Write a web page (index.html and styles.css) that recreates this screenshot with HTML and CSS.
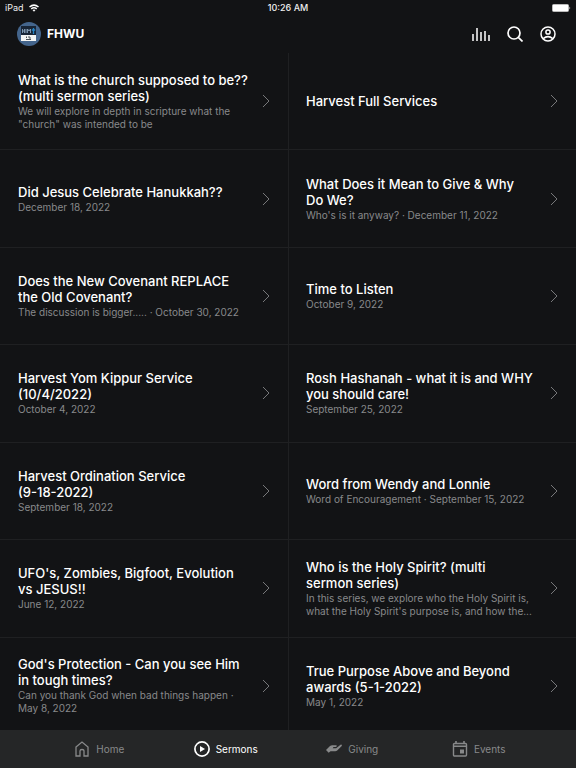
FILE: index.html
```html
<!DOCTYPE html>
<html lang="en">
<head>
  <meta charset="UTF-8">
  <meta name="viewport" content="width=device-width, initial-scale=1.0">
  <title>FHWU</title>
  <link rel="stylesheet" href="styles.css">
</head>
<body>
  <div class="status">
    <div class="device">
      <span>iPad</span>
      <svg width="10" height="8" viewBox="0 0 20 15" fill="none" stroke="#fff" stroke-width="3"><path d="M1 5.5Q10-2 19 5.5M4.500 9.300Q10 5 15.500 9.300"/><path d="M7 11.500Q10 9.500 13 11.500L10 15z" fill="#fff" stroke="none"/></svg>
    </div>
    <span class="clock">10:26 AM</span>
    <div class="battery">
      <svg width="19" height="8" viewBox="0 0 19 8"><rect x=".5" y=".5" width="16" height="7" rx="1" fill="#fff" stroke="#bbb"/><path d="M17.500 2.500q1.500 1.500 0 3z" fill="#fff"/></svg>
    </div>
  </div>
  <header class="header">
    <div class="brand">
      <svg width="24" height="24" viewBox="0 0 24 24">
        <circle cx="12" cy="12" r="12" fill="#44658c"/>
        <rect x="4" y="4" width="15" height="9" fill="#182536"/>
        <rect x="4" y="13" width="15" height="6" fill="#f4f5f4"/>
        <path d="M5.500 7v4M7.500 7v4M5.500 9h2M9 7v4M10.500 11V7l1.500 2 1.500-2v4" fill="none" stroke="#88a2ba" stroke-width=".9"/>
        <path d="M16.500 6v6M14.800 8h3.400" stroke="#2483c5" stroke-width="1.300"/>
        <path d="M9.500 14.500v1.500M12 14v2h2M9 17.500h5" fill="none" stroke="#4b5257"/>
      </svg>
      <h1>FHWU</h1>
    </div>
    <div class="actions">
      <button type="button" aria-label="Now playing">
        <svg width="18" height="14" viewBox="0 0 18 14" stroke="#fff" stroke-width="1.500"><path d="M1 7v7M5 1v13M9 5v9M13 4v10M17 8v6"/></svg>
      </button>
      <button type="button" aria-label="Search">
        <svg width="16" height="16" viewBox="0 0 16 16" fill="none" stroke="#fff" stroke-width="1.700"><circle cx="7" cy="7" r="6"/><path d="M11.300 11.300l4.200 4.200"/></svg>
      </button>
      <button type="button" aria-label="Account">
        <svg width="16" height="16" viewBox="0 0 16 16" fill="none" stroke="#fff" stroke-width="1.500"><circle cx="8" cy="8" r="7"/><circle cx="8" cy="6" r="2.100"/><path d="M3.200 12.600Q8 8.600 12.800 12.600"/></svg>
      </button>
    </div>
  </header>

  <main class="sermons">
    <a class="item" href="#"><div class="text"><h2>What is the church supposed to be?? (multi sermon series)</h2><p>We will explore in depth in scripture what the "church" was intended to be</p></div><svg class="chevron" viewBox="0 0 8 14"><path d="M1 1l6 6-6 6"/></svg></a>
    <a class="item" href="#"><div class="text"><h2>Harvest Full Services</h2></div><svg class="chevron" viewBox="0 0 8 14"><path d="M1 1l6 6-6 6"/></svg></a>
    <a class="item" href="#"><div class="text"><h2>Did Jesus Celebrate Hanukkah??</h2><p>December 18, 2022</p></div><svg class="chevron" viewBox="0 0 8 14"><path d="M1 1l6 6-6 6"/></svg></a>
    <a class="item" href="#"><div class="text"><h2>What Does it Mean to Give &amp; Why Do We?</h2><p>Who's is it anyway? · December 11, 2022</p></div><svg class="chevron" viewBox="0 0 8 14"><path d="M1 1l6 6-6 6"/></svg></a>
    <a class="item" href="#"><div class="text"><h2>Does the New Covenant REPLACE the Old Covenant?</h2><p>The discussion is bigger..... · October 30, 2022</p></div><svg class="chevron" viewBox="0 0 8 14"><path d="M1 1l6 6-6 6"/></svg></a>
    <a class="item" href="#"><div class="text"><h2>Time to Listen</h2><p>October 9, 2022</p></div><svg class="chevron" viewBox="0 0 8 14"><path d="M1 1l6 6-6 6"/></svg></a>
    <a class="item" href="#"><div class="text"><h2>Harvest Yom Kippur Service (10/4/2022)</h2><p>October 4, 2022</p></div><svg class="chevron" viewBox="0 0 8 14"><path d="M1 1l6 6-6 6"/></svg></a>
    <a class="item" href="#"><div class="text"><h2>Rosh Hashanah - what it is and WHY you should care!</h2><p>September 25, 2022</p></div><svg class="chevron" viewBox="0 0 8 14"><path d="M1 1l6 6-6 6"/></svg></a>
    <a class="item" href="#"><div class="text"><h2>Harvest Ordination Service<br>(9-18-2022)</h2><p>September 18, 2022</p></div><svg class="chevron" viewBox="0 0 8 14"><path d="M1 1l6 6-6 6"/></svg></a>
    <a class="item" href="#"><div class="text"><h2>Word from Wendy and Lonnie</h2><p>Word of Encouragement · September 15, 2022</p></div><svg class="chevron" viewBox="0 0 8 14"><path d="M1 1l6 6-6 6"/></svg></a>
    <a class="item" href="#"><div class="text"><h2>UFO's, Zombies, Bigfoot, Evolution vs JESUS!!</h2><p>June 12, 2022</p></div><svg class="chevron" viewBox="0 0 8 14"><path d="M1 1l6 6-6 6"/></svg></a>
    <a class="item" href="#"><div class="text"><h2>Who is the Holy Spirit? (multi sermon series)</h2><p>In this series, we explore who the Holy Spirit is, what the Holy Spirit's purpose is, and how the...</p></div><svg class="chevron" viewBox="0 0 8 14"><path d="M1 1l6 6-6 6"/></svg></a>
    <a class="item" href="#"><div class="text"><h2>God's Protection - Can you see Him in tough times?</h2><p>Can you thank God when bad things happen · May 8, 2022</p></div><svg class="chevron" viewBox="0 0 8 14"><path d="M1 1l6 6-6 6"/></svg></a>
    <a class="item" href="#"><div class="text"><h2>True Purpose Above and Beyond awards (5-1-2022)</h2><p>May 1, 2022</p></div><svg class="chevron" viewBox="0 0 8 14"><path d="M1 1l6 6-6 6"/></svg></a>
  </main>

  <nav class="tabs">
    <a href="#">
      <svg width="16" height="16" viewBox="0 0 16 16" fill="none" stroke="currentColor" stroke-width="1.300"><path d="M2 6l6-5 6 5v9h-4v-5q0-1.500-2-1.500T6 10v5H2z"/></svg>
      Home
    </a>
    <a class="active" href="#">
      <svg width="16" height="16" viewBox="0 0 16 16"><circle cx="8" cy="8" r="7.100" fill="none" stroke="currentColor" stroke-width="1.700"/><path d="M6 5l5 3-5 3z" fill="currentColor"/></svg>
      Sermons
    </a>
    <a href="#">
      <svg width="16" height="16" viewBox="0 0 16 16" fill="currentColor"><path d="M0 9l4-4q1-.8 2.200-.8H10q1 0 .8.900t-1.300.9H7.500l-.8 1.200h3.500l4.300-3.400q1.100-.5 1.400.4.100.5-.4 1l-4.300 4.300q-.8.700-2 .7H4.500l-1.800 1.500z"/></svg>
      Giving
    </a>
    <a href="#">
      <svg width="16" height="16" viewBox="0 0 16 16" fill="none" stroke="currentColor" stroke-width="1.400"><rect x="1.500" y="2.500" width="13" height="12.500" rx="1"/><path d="M1.500 5.200h13M4 0v3M12 0v3" stroke-width="1.600"/><rect x="8" y="8.500" width="4" height="4" fill="currentColor" stroke="none"/></svg>
      Events
    </a>
  </nav>
</body>
</html>
```
FILE: styles.css
```css
* { box-sizing: border-box; }
body { font-family: Inter, "Liberation Sans", sans-serif; margin: 0; min-height: 100vh; display: flex; flex-direction: column; background: #121315; color: #fff; }
svg { display: block; flex: none; }
h1, h2, p { margin: 0; }
a { color: inherit; text-decoration: none; }

.status { display: grid; grid-template-columns: 1fr auto 1fr; align-items: center; height: 16px; padding: 0 5px; font-size: 9px; line-height: 16px; color: #eee; }
.device { display: flex; align-items: center; gap: 5px; }
.clock { font-weight: 500; }
.battery { justify-self: end; }

.header { display: flex; justify-content: space-between; align-items: center; height: 37px; padding: 0 20px 1px 17px; }
.brand { display: flex; align-items: center; gap: 6px; }
.brand h1 { font-size: 12px; line-height: 16px; font-weight: 700; }
.actions { display: flex; align-items: center; gap: 17px; }
.actions button { display: block; padding: 0; border: 0; background: none; }

.sermons { flex: 1; display: grid; grid-template-columns: 1fr 1fr; grid-auto-rows: 1fr; }
.item { display: flex; align-items: center; gap: 12px; min-height: 88px; padding: 8px 18px; border-bottom: 1px solid #1f2022; }
.item:nth-child(even) { gap: 16px; padding-left: 17px; border-left: 1px solid #1f2022; }
.text { flex: 1; min-width: 0; }
.text h2 { font-size: 13px; line-height: 16px; font-weight: 500; }
.text p { margin-top: 1px; font-size: 10px; line-height: 13px; color: #88898b; }
.chevron { width: 8px; height: 14px; fill: none; stroke: #77787a; stroke-width: 1; }

.tabs { position: sticky; bottom: 0; display: grid; grid-template-columns: repeat(4, 1fr); height: 38px; margin-top: -5px; padding: 0 34px 0 36px; background: #252627; color: #88898a; font-size: 10px; line-height: 12px; }
.tabs a { display: flex; align-items: center; justify-content: center; gap: 6px; }
.tabs .active { color: #fff; }
```
